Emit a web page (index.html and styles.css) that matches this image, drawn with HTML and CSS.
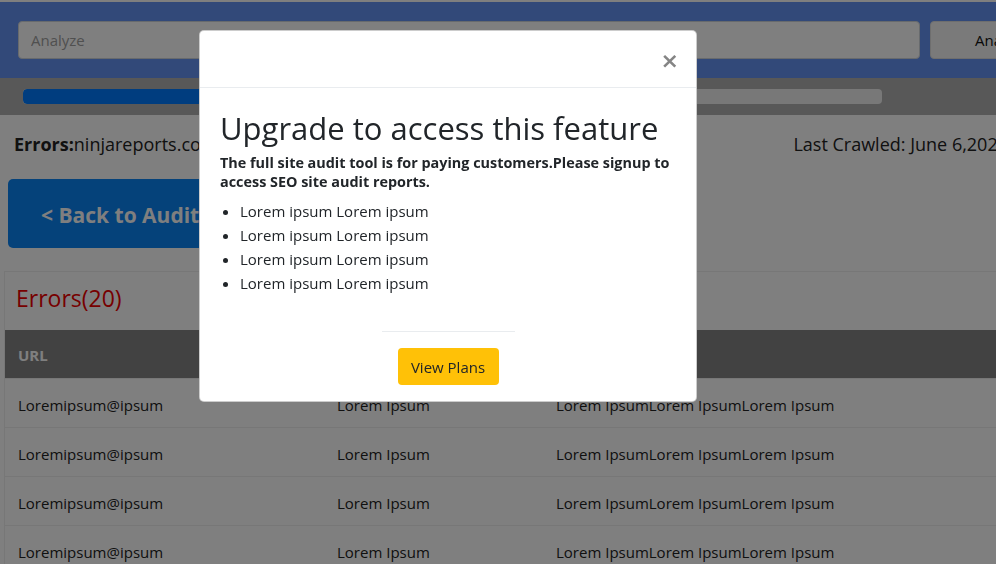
FILE: index.html
```html
<!DOCTYPE html>
<html lang="en">
<head>
<meta charset="utf-8">
<title>Site Audit - Errors</title>
<link rel="stylesheet" href="styles.css">
</head>
<body>
<div class="page">
  <header class="topbar">
    <input class="search" type="text" placeholder="Analyze">
    <button class="analyze-btn">Analyze</button>
  </header>
  <div class="progress-band">
    <div class="progress-track"><div class="progress-fill" style="width:45%"></div></div>
  </div>
  <div class="title-row">
    <div class="site-title"><b>Errors:</b>ninjareports.com</div>
    <div class="crawled">Last Crawled: June 6,2020</div>
  </div>
  <div class="back-wrap">
    <button class="back-btn">&lt; Back to Audit Report</button>
  </div>
  <section class="card">
    <h2 class="card-title">Errors(20)</h2>
    <table class="table">
      <thead>
        <tr><th class="c1">URL</th><th class="c2">Type</th><th class="c3">Description</th></tr>
      </thead>
      <tbody>
        <tr><td>Loremipsum@ipsum</td><td>Lorem Ipsum</td><td>Lorem IpsumLorem IpsumLorem Ipsum</td></tr>
        <tr><td>Loremipsum@ipsum</td><td>Lorem Ipsum</td><td>Lorem IpsumLorem IpsumLorem Ipsum</td></tr>
        <tr><td>Loremipsum@ipsum</td><td>Lorem Ipsum</td><td>Lorem IpsumLorem IpsumLorem Ipsum</td></tr>
        <tr><td>Loremipsum@ipsum</td><td>Lorem Ipsum</td><td>Lorem IpsumLorem IpsumLorem Ipsum</td></tr>
      </tbody>
    </table>
  </section>
</div>

<div class="backdrop"></div>
<div class="modal">
  <div class="modal-header">
    <button class="close" aria-label="Close">&times;</button>
  </div>
  <div class="modal-body">
    <h1 class="modal-title">Upgrade to access this feature</h1>
    <p class="lead">The full site audit tool is for paying customers.Please signup to access SEO site audit reports.</p>
    <ul class="features">
      <li>Lorem ipsum Lorem ipsum</li>
      <li>Lorem ipsum Lorem ipsum</li>
      <li>Lorem ipsum Lorem ipsum</li>
      <li>Lorem ipsum Lorem ipsum</li>
    </ul>
  </div>
  <div class="modal-footer">
    <div class="divider"></div>
    <button class="plans-btn">View Plans</button>
  </div>
</div>
</body>
</html>
```

FILE: styles.css
```css
html, body {
  margin: 0;
  padding: 0;
  overflow: hidden;
  width: 996px;
  height: 564px;
}
body {
  font-family: "Open Sans", "Noto Sans", sans-serif;
  color: #222;
  background: #fff;
}
.page {
  width: 1060px;
  padding-top: 2px;
  background: #fff;
}
.topbar {
  display: flex;
  align-items: center;
  background: #6493f2;
  padding: 19px 18px;
}
.search {
  flex: 1;
  height: 38px;
  box-sizing: border-box;
  border: 1px solid #ced4da;
  border-radius: 4px;
  padding: 0 12px;
  font-family: inherit;
  font-size: 15px;
  background: #fff;
  color: #495057;
}
.search::placeholder { color: #a0a0a0; }
.analyze-btn {
  margin-left: 10px;
  width: 112px;
  height: 38px;
  box-sizing: border-box;
  border: 1px solid #ddd;
  border-radius: 4px;
  background: #f4f4f4;
  font-family: inherit;
  font-size: 15px;
  color: #111;
  text-align: left;
  padding-left: 44px;
}
.progress-band {
  background: #b0b0b0;
  padding: 11px 23px;
}
.progress-track {
  width: 859px;
  height: 15px;
  border-radius: 4px;
  background: #f0f0f0;
  overflow: hidden;
}
.progress-fill {
  height: 100%;
  background: #007bff;
  border-radius: 4px;
}
.title-row {
  display: flex;
  justify-content: space-between;
  padding: 17px 52px 0 14px;
  font-size: 18px;
  color: #222;
  height: 40px;
}
.site-title b { font-weight: 700; }
.back-wrap {
  padding: 7px 8px 0;
}
.back-btn {
  height: 69px;
  border: none;
  border-radius: 5px;
  background: #0a84f5;
  color: #fff;
  font-family: inherit;
  font-weight: 700;
  font-size: 21px;
  padding: 2px 33px 0;
}
.card {
  margin: 23px 0 0 4px;
  border: 1px solid #eee;
  border-right: none;
}
.card-title {
  margin: 0;
  padding: 10px 11px 16px;
  font-weight: 400;
  font-size: 23px;
  color: #e00;
  line-height: 32px;
}
.table {
  width: 100%;
  border-collapse: collapse;
  font-size: 15px;
}
.table th {
  background: #858585;
  color: #fff;
  text-align: left;
  font-weight: 700;
  height: 46px;
  padding: 2px 13px 0;
  font-size: 15px;
}
.table td {
  height: 45px;
  padding: 3px 13px 0;
  border-top: 1px solid #eee;
  color: #222;
}
.c1 { width: 293px; }
.c2 { width: 193px; }

.backdrop {
  position: fixed;
  inset: 0;
  background: rgba(0, 0, 0, 0.5);
}
.modal {
  position: fixed;
  left: 199px;
  top: 30px;
  width: 498px;
  height: 372px;
  box-sizing: border-box;
  background: #fff;
  border: 1px solid rgba(0, 0, 0, 0.2);
  border-radius: 5px;
  display: flex;
  flex-direction: column;
}
.modal-header {
  height: 56px;
  border-bottom: 1px solid #e9ecef;
  display: flex;
  justify-content: flex-end;
  align-items: center;
  padding: 0 17px;
}
.close {
  border: none;
  background: none;
  font-family: "DejaVu Sans", sans-serif;
  font-size: 22px;
  font-weight: 700;
  color: #858585;
  padding: 0;
  line-height: 1;
  margin-top: 4px;
}
.modal-body {
  padding: 20px 20px 0;
}
.modal-title {
  margin: 0;
  font-weight: 500;
  font-size: 31px;
  line-height: 40px;
  color: #212529;
}
.lead {
  margin: 5px 0 8px;
  font-weight: 700;
  font-size: 14.4px;
  line-height: 19px;
  color: #212529;
}
.features {
  margin: 0;
  padding-left: 20px;
  font-size: 15px;
  line-height: 24px;
  color: #212529;
}
.modal-footer {
  margin-top: auto;
  display: flex;
  flex-direction: column;
  align-items: center;
  padding-bottom: 16px;
}
.divider {
  width: 133px;
  height: 1px;
  background: #e9ecef;
}
.plans-btn {
  margin-top: 16px;
  width: 101px;
  height: 37px;
  border: none;
  border-radius: 4px;
  background: #ffc107;
  color: #212529;
  font-family: inherit;
  font-size: 15px;
}
```
